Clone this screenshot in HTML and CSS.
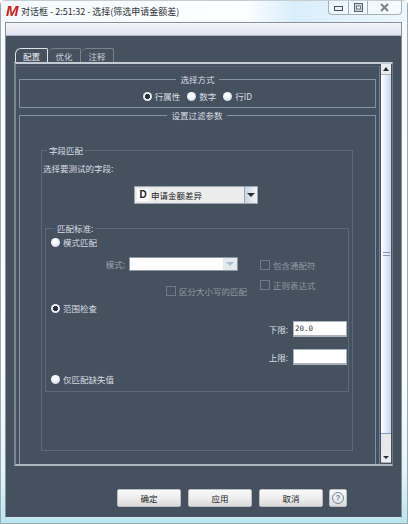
FILE: index.html
```html
<!DOCTYPE html>
<html lang="zh">
<head>
    <meta charset="UTF-8">
    <title>对话框 - 2:51:32 - 选择(筛选申请金额差)</title>
    <link rel="stylesheet" href="styles.css">
</head>
<body>
    <div class="window">
        <div class="titlebar">
            <span class="app-logo">M</span>
            <span class="title-text">对话框 - 2:51:32 - 选择(筛选申请金额差)</span>
            <div class="win-controls">
                <span class="win-btn win-min"><svg width="9" height="5" viewBox="0 0 9 5"><rect x="0.5" y="0.5" width="8" height="4" fill="#eef2f6" stroke="#46505c"/></svg></span>
                <span class="win-btn win-max"><svg width="9" height="9" viewBox="0 0 9 9"><rect x="0.5" y="0.5" width="8" height="8" fill="#c9d2dc" stroke="#5a6470"/><rect x="2.5" y="3" width="4" height="3" fill="#eef2f6" stroke="#5a6470" stroke-width="0.8"/></svg></span>
                <span class="win-btn win-close"><svg width="9" height="9" viewBox="0 0 9 9"><path d="M1 1 L8 8 M8 1 L1 8" stroke="#7b848e" stroke-width="2"/></svg></span>
            </div>
        </div>

        <div class="client">
            <div class="menu-strip"></div>

            <div class="tabs">
                <div class="tab active">配置</div>
                <div class="tab">优化</div>
                <div class="tab">注释</div>
            </div>

            <div class="tab-panel">
                <div class="scroll-view">
                    <fieldset class="group select-group">
                        <legend class="legend-center">选择方式</legend>
                        <div class="mode-options">
                            <label class="opt"><input type="radio" name="way" checked>行属性</label>
                            <label class="opt"><input type="radio" name="way">数字</label>
                            <label class="opt"><input type="radio" name="way">行ID</label>
                        </div>
                    </fieldset>

                    <fieldset class="group filter-group">
                        <legend class="legend-center">设置过滤参数</legend>

                        <fieldset class="group field-group">
                            <legend>字段匹配</legend>
                            <div class="field-label">选择要测试的字段:</div>
                            <div class="field-combo">
                                <span class="combo-icon">D</span>
                                <span class="combo-text">申请金额差异</span>
                                <span class="combo-arrow"><i class="arrow-down"></i></span>
                            </div>

                            <fieldset class="group match-group">
                                <legend>匹配标准:</legend>
                                <label class="opt"><input type="radio" name="match">模式匹配</label>

                                <div class="pattern-area">
                                    <div class="pattern-left">
                                        <div class="pattern-row">
                                            <span class="muted">模式:</span>
                                            <span class="pattern-combo"><span class="pattern-arrow"><i class="arrow-down arrow-pale"></i></span></span>
                                        </div>
                                        <label class="check case-check"><input type="checkbox" disabled>区分大小写的匹配</label>
                                    </div>
                                    <div class="pattern-right">
                                        <label class="check"><input type="checkbox" disabled>包含通配符</label>
                                        <label class="check"><input type="checkbox" disabled>正则表达式</label>
                                    </div>
                                </div>

                                <label class="opt range-opt"><input type="radio" name="match" checked>范围检查</label>

                                <div class="bounds">
                                    <div class="bound-row">下限:<input class="bound-input" type="text" value="20.0"></div>
                                    <div class="bound-row">上限:<input class="bound-input" type="text"></div>
                                </div>

                                <label class="opt missing-opt"><input type="radio" name="match">仅匹配缺失值</label>
                            </fieldset>
                        </fieldset>
                    </fieldset>
                </div>

                <div class="scrollbar">
                    <div class="sb-btn"><i class="arrow-up"></i></div>
                    <div class="sb-thumb"><span class="sb-grip"></span></div>
                    <div class="sb-track"></div>
                    <div class="sb-btn"><i class="arrow-down arrow-small"></i></div>
                </div>
            </div>

            <div class="actions">
                <button class="btn" type="button">确定</button>
                <button class="btn" type="button">应用</button>
                <button class="btn" type="button">取消</button>
                <button class="btn help-btn" type="button"><span class="help-icon">?</span></button>
            </div>
        </div>
    </div>
</body>
</html>
```

FILE: styles.css
```css
* {
    margin: 0;
    padding: 0;
    box-sizing: border-box;
}

html, body {
    width: 408px;
    height: 524px;
    overflow: hidden;
}

body {
    font-family: "Noto Sans CJK SC", "Liberation Sans", sans-serif;
    font-size: 8.5px;
    color: #d9dde2;
}

.window {
    width: 408px;
    height: 524px;
    padding: 0 5px 5px 4px;
    display: flex;
    flex-direction: column;
    background: linear-gradient(180deg, #f6fbfd 0%, #fbfdfe 70%, #e2f5fa 90%, #b8e6f0 100%);
    border: 1px solid #9fa9b0;
    border-top-color: #c5ccd0;
    border-radius: 5px 5px 0 0;
}

.titlebar {
    height: 21px;
    flex-shrink: 0;
    display: flex;
    align-items: flex-start;
    background: linear-gradient(90deg, #f4fafc 0%, #fdfeff 60%, #d9eefb 72%, #eef7fc 100%);
    margin: 0 -5px 0 -4px;
    padding-left: 5px;
}

.app-logo {
    width: 12px;
    margin-top: 2px;
    font: italic bold 15px/15px "Liberation Sans", sans-serif;
    color: #d0201c;
}

.title-text {
    margin-left: 3px;
    margin-top: 3px;
    font-size: 9px;
    line-height: 15px;
    color: #2b2f33;
}

.win-controls {
    margin-left: auto;
    margin-right: 5px;
    width: 74px;
    height: 14px;
    display: flex;
    border: 1px solid #a4b0b8;
    border-top: none;
    border-radius: 0 0 4px 4px;
    background: rgba(255, 255, 255, 0.45);
}

.win-btn {
    display: flex;
    align-items: center;
    justify-content: center;
}

.win-min {
    width: 20px;
    border-right: 1px solid #a4b0b8;
    padding-top: 2px;
}

.win-max {
    width: 19px;
    border-right: 1px solid #a4b0b8;
}

.win-close {
    flex: 1;
}

.client {
    flex: 1;
    background: #465160;
    border: 1px solid #87919c;
    border-bottom-color: #d8e4ea;
    display: flex;
    flex-direction: column;
    padding: 0 8px;
}

.menu-strip {
    height: 13px;
    margin: 0 -8px;
    background: linear-gradient(180deg, #f6f6fb 0%, #dfe1ee 100%);
    border-bottom: 1px solid #b4b9c6;
}

.tabs {
    display: flex;
    margin-top: 12px;
    padding-left: 1px;
    height: 14px;
}

.tab {
    width: 33px;
    height: 14px;
    border: 1px solid #76818e;
    border-bottom: none;
    border-left: none;
    border-radius: 6px 2px 0 0;
    text-align: center;
    line-height: 14px;
    color: #c9ced4;
}

.tab.active {
    border: 1px solid #dfe3e8;
    border-bottom: none;
    color: #eceff2;
}

.tab-panel {
    height: 404px;
    border: 1px solid #6f7a87;
    border-top: 2px solid #c4cad1;
    border-left: 2px solid #7c8794;
    border-bottom: 2px solid #aeb6bf;
    display: flex;
    padding: 2px 1px 0 1px;
}

.scroll-view {
    width: 363px;
    height: 398px;
    overflow: hidden;
    border-top: 1px solid #56626f;
    border-right: 1px solid #6d7f9c;
    padding: 0 3px 0 2px;
    flex-shrink: 0;
}

.group {
    border: 1px solid #5c6979;
    min-width: 0;
}

legend {
    font-size: 8.5px;
    line-height: 12px;
    padding: 0 2px;
    margin-left: 4px;
    color: #d9dde2;
}

.legend-center {
    margin: 0 auto;
    padding: 0 4px;
}

.select-group {
    height: 35px;
    margin-top: 6px;
    border: 1px solid #7f92a8;
}

.mode-options {
    display: flex;
    justify-content: center;
    gap: 7px;
    margin-top: 4px;
}

.filter-group {
    height: 362px;
    margin-top: 1px;
    padding: 23px 22px 0 21px;
    border-color: #7f92a8;
    border-bottom: none;
}

.field-group {
    height: 307px;
    padding: 5px 4px 0 1px;
}

.field-label {
    line-height: 14px;
}

.field-combo {
    width: 124px;
    height: 18px;
    margin: 11px 0 0 91px;
    display: flex;
    align-items: center;
    background: #ececec;
    border: 1px solid #9ba6b2;
    color: #222;
}

.combo-icon {
    width: 12px;
    margin-left: 2px;
    font: bold 10px/12px "Liberation Sans", sans-serif;
    text-align: center;
    background: #fff;
}

.combo-text {
    margin-left: 2px;
    flex: 1;
}

.combo-arrow {
    width: 13px;
    height: 100%;
    display: flex;
    align-items: center;
    justify-content: center;
    background: linear-gradient(90deg, #cbd6e2, #f2f5f8);
    border-left: 1px solid #9ba6b2;
}

.arrow-down {
    width: 0;
    height: 0;
    border-left: 4px solid transparent;
    border-right: 4px solid transparent;
    border-top: 4px solid #2a2d33;
}

.arrow-small {
    border-left-width: 3px;
    border-right-width: 3px;
    border-top-width: 3px;
}

.arrow-pale {
    border-top-color: #a9bdd6;
}

.arrow-up {
    width: 0;
    height: 0;
    border-left: 3px solid transparent;
    border-right: 3px solid transparent;
    border-bottom: 4px solid #2a2d33;
}

.match-group {
    height: 170px;
    margin: 18px 0 0 2px;
    width: 304px;
    padding: 1px 1px 0 5px;
}

.opt {
    display: flex;
    align-items: center;
    gap: 3px;
    line-height: 14px;
    height: 14px;
    color: #d9dde2;
}

.opt input {
    appearance: none;
    width: 9px;
    height: 9px;
    border-radius: 50%;
    background: radial-gradient(circle at 45% 35%, #fff 0%, #eef2f8 50%, #a9b8cc 100%);
    flex-shrink: 0;
}

.opt input:checked {
    background: radial-gradient(circle, #2b2f36 0%, #2b2f36 35%, #eef2f8 45%, #cfd8e4 100%);
}

.pattern-area {
    display: flex;
    margin-top: 8px;
    height: 42px;
}

.pattern-left {
    width: 209px;
}

.pattern-row {
    display: flex;
    align-items: center;
    justify-content: flex-end;
    gap: 4px;
    height: 14px;
    padding-right: 22px;
}

.muted {
    color: #9aa2ab;
}

.pattern-combo {
    width: 109px;
    height: 14px;
    background: #fff;
    border: 1px solid #8e99a5;
    display: flex;
    justify-content: flex-end;
}

.pattern-arrow {
    width: 14px;
    display: flex;
    align-items: center;
    justify-content: center;
    background: #e6e9ec;
}

.check {
    display: flex;
    align-items: center;
    gap: 3px;
    height: 14px;
    color: #8f98a2;
}

.check input {
    appearance: none;
    width: 10px;
    height: 10px;
    border: 1px solid #6f7b88;
    background: transparent;
    flex-shrink: 0;
}

.case-check {
    margin: 13px 0 0 115px;
    white-space: nowrap;
}

.pattern-right {
    padding-top: 1px;
    display: flex;
    flex-direction: column;
    gap: 6px;
}

.range-opt {
    margin-top: 2px;
}

.bounds {
    margin-top: 6px;
    display: flex;
    flex-direction: column;
    align-items: flex-end;
    gap: 12px;
}

.bound-row {
    display: flex;
    align-items: center;
    gap: 5px;
    height: 16px;
}

.bound-input {
    width: 54px;
    height: 16px;
    border: 1px solid #aab2bc;
    border-bottom-width: 2px;
    background: #fff;
    padding-left: 1px;
    font: 7.5px "DejaVu Sans Mono", monospace;
    color: #333;
}

.missing-opt {
    margin-top: 7px;
}

.scrollbar {
    width: 11px;
    margin: -2px 0 0 1px;
    height: 399px;
    display: flex;
    flex-direction: column;
}

.sb-btn {
    height: 11px;
    flex-shrink: 0;
    display: flex;
    align-items: center;
    justify-content: center;
    background: #e9ebee;
    border-bottom: 1px solid #a8b0ba;
}

.sb-thumb {
    flex: 1;
    display: flex;
    align-items: center;
    justify-content: center;
    background: linear-gradient(90deg, #ffffff 0%, #eaf1fb 40%, #c3d5ee 100%);
    border-bottom: 1px solid #7f9cc4;
}

.sb-grip {
    width: 7px;
    height: 4px;
    border-top: 1px solid #8a93b5;
    border-bottom: 1px solid #8a93b5;
}

.sb-track {
    height: 18px;
    flex-shrink: 0;
    background: #e6e8ea;
}

.actions {
    display: flex;
    gap: 7px;
    margin-top: 23px;
    padding-left: 103px;
}

.btn {
    width: 64px;
    height: 18px;
    font-family: inherit;
    font-size: 8.5px;
    line-height: 14px;
    color: #222;
    background: linear-gradient(180deg, #f9f9f9 0%, #ececec 55%, #d9d9d9 100%);
    border: 1px solid #b9bdc2;
    border-radius: 2px;
}

.help-btn {
    width: 18px;
    margin-left: -1px;
    display: flex;
    align-items: center;
    justify-content: center;
}

.help-icon {
    width: 12px;
    height: 12px;
    border: 1px solid #6f86a0;
    border-radius: 50%;
    font: bold 8px/10px "Liberation Sans", sans-serif;
    color: #5f7590;
}
```
